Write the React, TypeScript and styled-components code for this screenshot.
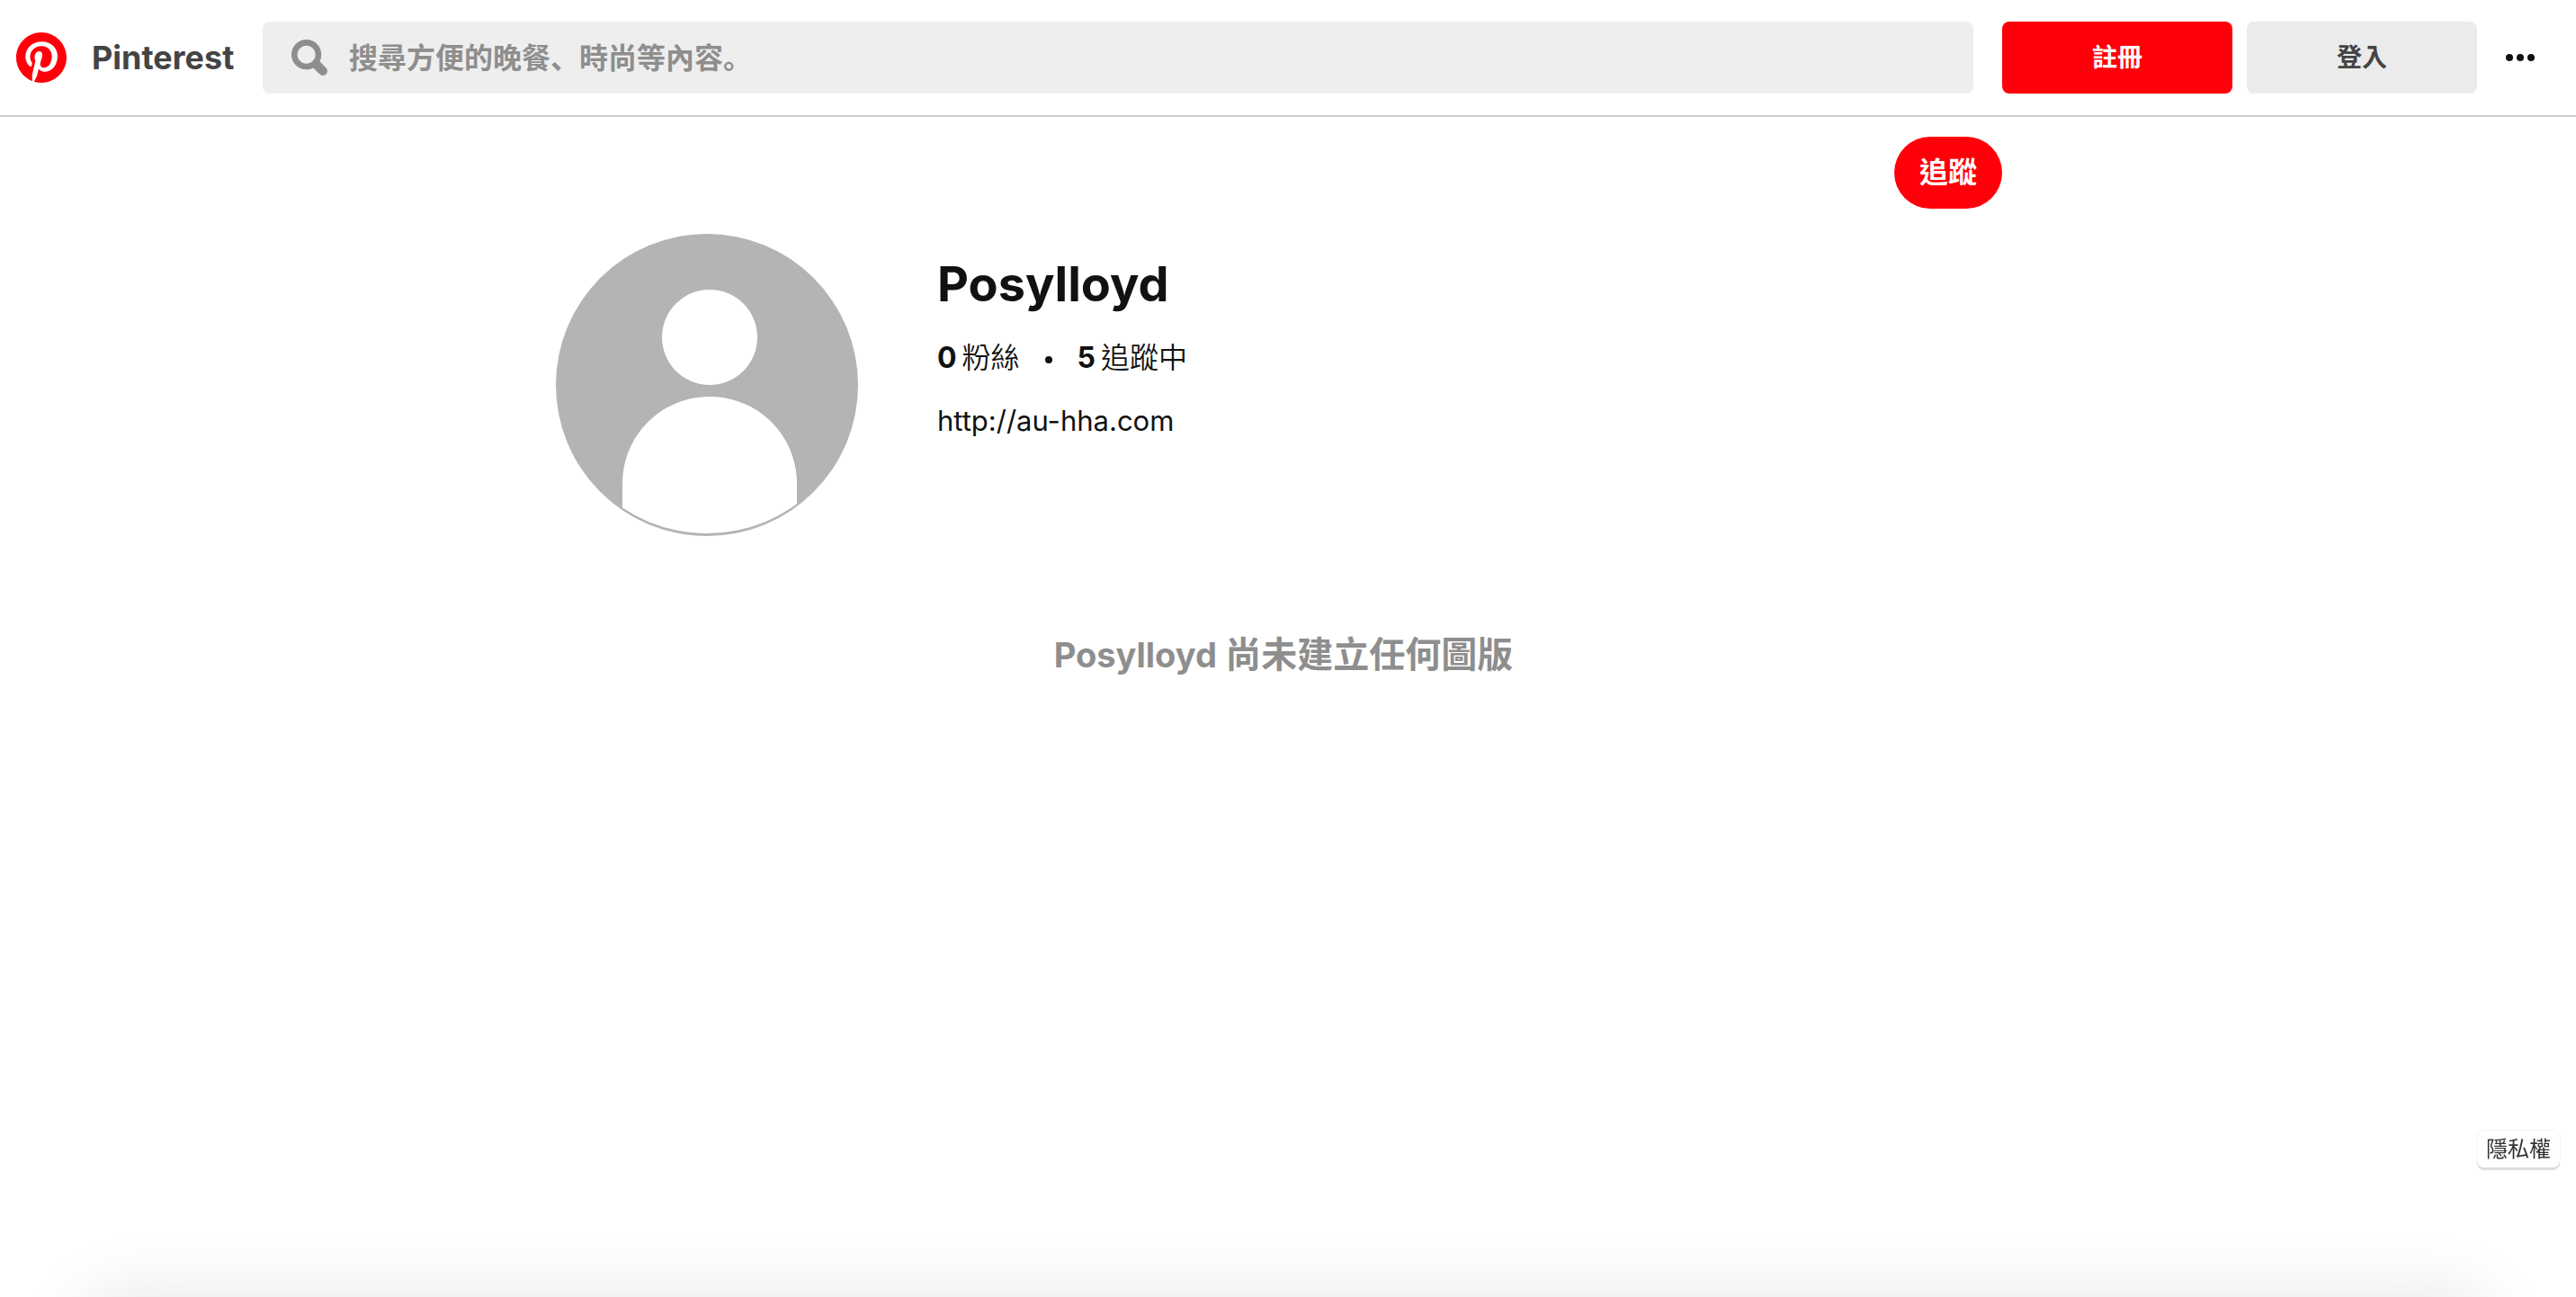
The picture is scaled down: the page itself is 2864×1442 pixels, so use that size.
import React from "react";
import styled, { createGlobalStyle } from "styled-components";

const GlobalStyle = createGlobalStyle`
  *, *::before, *::after { box-sizing: border-box; }
  body {
    margin: 0;
    min-height: 100vh;
    background: #fff;
    color: #111;
    font-family: Inter, "Noto Sans CJK TC", "Liberation Sans", sans-serif;
    font-size: 32px;
    line-height: 40px;
  }
  button, input { font: inherit; }
  h1, h2, p { margin: 0; }
`;

const Header = styled.header`
  display: flex;
  align-items: center;
  padding: 24px 30px 24px 18px;
  border-bottom: 2px solid #ccc;
`;

const Brand = styled.a`
  display: flex;
  align-items: center;
  gap: 28px;
  width: 274px;
  flex: none;
  color: #444;
  font-size: 36px;
  font-weight: 650;
  text-decoration: none;
`;

const SearchBox = styled.label`
  display: flex;
  flex: 1;
  align-items: center;
  gap: 24px;
  height: 80px;
  padding: 0 32px;
  border-radius: 8px;
  background: #eee;
`;

const SearchInput = styled.input`
  flex: 1;
  min-width: 0;
  height: 48px;
  padding: 0;
  border: 0;
  outline: 0;
  background: transparent;
  color: #444;
  font-family: Inter, "Noto Sans CJK SC", sans-serif;
  font-weight: 700;
  &::placeholder { color: #8e8e8e; opacity: 1; }
`;

const Actions = styled.div`
  display: flex;
  align-items: center;
  gap: 16px;
  margin-left: 32px;
`;

const Button = styled.button<{ $primary?: boolean }>`
  width: 256px;
  height: 80px;
  padding: 0;
  border: 0;
  border-radius: 8px;
  background: ${(p) => (p.$primary ? "#ff000a" : "#ebebeb")};
  color: ${(p) => (p.$primary ? "#fff" : "#444")};
  font-size: 28px;
  font-weight: 700;
  cursor: pointer;
`;

const FollowButton = styled(Button)`
  width: 120px;
  border-radius: 40px;
  font-size: 32px;
`;

const MoreButton = styled.button`
  display: flex;
  align-items: center;
  justify-content: center;
  width: 64px;
  height: 80px;
  padding: 0;
  border: 0;
  background: transparent;
  cursor: pointer;
`;

const Main = styled.main`
  max-width: 1628px;
  margin: 0 auto;
  padding: 22px 20px 0 0;
`;

const Toolbar = styled.div`
  display: flex;
  justify-content: flex-end;
`;

const Profile = styled.section`
  display: flex;
  gap: 88px;
  margin-top: 28px;
`;

const Details = styled.div`
  padding-top: 24px;
`;

const Name = styled.h1`
  font-size: 54px;
  font-weight: 700;
  line-height: 64px;
`;

const Stats = styled.div`
  display: flex;
  align-items: center;
  margin-top: 30px;
`;

const Stat = styled.span`
  display: flex;
  gap: 6px;
  font-weight: 350;
  white-space: nowrap;
`;

const Count = styled.b`
  font-weight: 700;
`;

const Dot = styled.span`
  width: 8px;
  height: 8px;
  margin: 4px 28px 0;
  border-radius: 50%;
  background: #111;
`;

const Website = styled.a`
  display: block;
  margin-top: 30px;
  color: #111;
  font-size: 31px;
  text-decoration: none;
`;

const EmptyMessage = styled.h2`
  margin-top: 108px;
  padding-left: 10px;
  color: #8e8e8e;
  font-size: 40px;
  font-weight: 700;
  line-height: 48px;
  text-align: center;
`;

const Username = styled.span`
  font-size: 38px;
`;

const PrivacyButton = styled.button`
  position: fixed;
  right: 18px;
  bottom: 144px;
  height: 41px;
  padding: 0 10px;
  border: 0;
  border-radius: 8px;
  background: #fff;
  box-shadow: 0 3px 1px #ddd, 0 0 2px #ddd;
  color: #333;
  font-size: 24px;
  line-height: 40px;
  cursor: pointer;
`;

const BottomSheet = styled.div`
  position: fixed;
  top: 100%;
  left: 96px;
  right: 100px;
  height: 200px;
  border-radius: 32px;
  box-shadow: 0 0 80px rgba(0, 0, 0, 0.11);
  pointer-events: none;
`;

const PinterestLogo = () => (
  <svg width="56" height="56" viewBox="0 0 24 24" aria-hidden="true">
    <circle cx="12" cy="12" r="11.6" fill="#fff" />
    <path
      fill="#ff000a"
      d="M0 12c0 5.123 3.211 9.497 7.73 11.218-.11-.937-.227-2.482.025-3.566.217-.932 1.401-5.938 1.401-5.938s-.357-.715-.357-1.774c0-1.66.962-2.9 2.161-2.9 1.02 0 1.512.765 1.512 1.682 0 1.025-.653 2.557-.99 3.978-.281 1.189.597 2.159 1.769 2.159 2.123 0 3.756-2.239 3.756-5.471 0-2.861-2.056-4.86-4.991-4.86-3.398 0-5.393 2.549-5.393 5.184 0 1.027.395 2.127.889 2.726a.36.36 0 0 1 .083.343c-.091.378-.293 1.189-.332 1.355-.053.218-.173.265-.4.159-1.492-.694-2.424-2.875-2.424-4.627 0-3.769 2.737-7.229 7.892-7.229 4.144 0 7.365 2.953 7.365 6.899 0 4.117-2.595 7.431-6.199 7.431-1.211 0-2.348-.63-2.738-1.373 0 0-.599 2.282-.744 2.84-.282 1.084-1.064 2.456-1.549 3.235C9.584 23.815 10.77 24 12 24c6.627 0 12-5.373 12-12S18.627 0 12 0 0 5.373 0 12"
    />
  </svg>
);

const SearchIcon = () => (
  <svg width="40" height="40" viewBox="0 0 24 24" fill="#8e8e8e" aria-hidden="true">
    <path d="M10 16c-3.31 0-6-2.69-6-6s2.69-6 6-6 6 2.69 6 6-2.69 6-6 6m13.12 2.88-4.26-4.26A9.842 9.842 0 0 0 20 10c0-5.52-4.48-10-10-10S0 4.48 0 10s4.48 10 10 10c1.67 0 3.24-.41 4.62-1.14l4.26 4.26a3 3 0 0 0 4.24 0 3 3 0 0 0 0-4.24" />
  </svg>
);

const Avatar = () => (
  <svg width="336" height="336" viewBox="0 0 336 336" role="img" aria-label="Posylloyd">
    <defs>
      <clipPath id="avatar-inner">
        <circle cx="168" cy="164" r="169" />
      </clipPath>
    </defs>
    <circle cx="168" cy="168" r="168" fill="#b4b4b4" />
    <circle cx="171" cy="115" r="53" fill="#fff" />
    <path
      clipPath="url(#avatar-inner)"
      fill="#fff"
      d="M74 336V278C74 224 117 181 171 181S268 224 268 278V336Z"
    />
  </svg>
);

export default function App() {
  return (
    <>
      <GlobalStyle />
      <Header>
        <Brand href="#">
          <PinterestLogo />
          Pinterest
        </Brand>
        <SearchBox>
          <SearchIcon />
          <SearchInput type="text" placeholder="搜尋方便的晚餐、時尚等內容。" aria-label="搜尋" />
        </SearchBox>
        <Actions>
          <Button type="button" $primary>註冊</Button>
          <Button type="button">登入</Button>
          <MoreButton type="button" aria-label="更多">
            <svg width="32" height="8" viewBox="0 0 32 8" fill="#111" aria-hidden="true">
              <circle cx="4" cy="4" r="4" />
              <circle cx="16" cy="4" r="4" />
              <circle cx="28" cy="4" r="4" />
            </svg>
          </MoreButton>
        </Actions>
      </Header>
      <Main>
        <Toolbar>
          <FollowButton type="button" $primary>追蹤</FollowButton>
        </Toolbar>
        <Profile>
          <Avatar />
          <Details>
            <Name>Posylloyd</Name>
            <Stats>
              <Stat><Count>0</Count>粉絲</Stat>
              <Dot />
              <Stat><Count>5</Count>追蹤中</Stat>
            </Stats>
            <Website href="http://au-hha.com">http://au-hha.com</Website>
          </Details>
        </Profile>
        <EmptyMessage>
          <Username>Posylloyd</Username> 尚未建立任何圖版
        </EmptyMessage>
      </Main>
      <PrivacyButton type="button">隱私權</PrivacyButton>
      <BottomSheet />
    </>
  );
}
